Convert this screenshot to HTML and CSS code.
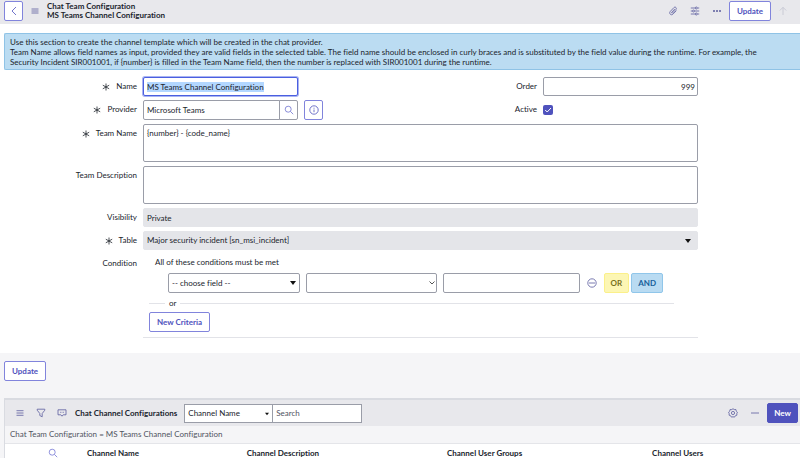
FILE: index.html
```html
<!DOCTYPE html>
<html lang="en">
<head>
<meta charset="utf-8">
<title>Chat Team Configuration</title>
<link rel="stylesheet" href="styles.css">
</head>
<body>
<header class="topbar">
  <button class="btn btn-square" type="button" aria-label="Back"><svg class="icon icon-lg" viewBox="0 0 12 12"><path d="M8 2 4 6l4 4"/></svg></button>
  <button class="tool tool-menu" type="button" aria-label="Menu"><svg class="icon" viewBox="0 0 10 10"><path d="M1.500 3h7M1.500 5h7M1.500 7h7"/></svg></button>
  <h1 class="title">Chat Team Configuration<br>MS Teams Channel Configuration</h1>
  <div class="actions">
    <button class="tool" type="button" aria-label="Attachments"><svg class="icon" viewBox="0 0 10 10"><path d="M6.800 3 3.700 6.300c-.5.600.3 1.300.9.700l3.300-3.500c1.300-1.500-.7-3.300-2-1.900L2.300 5.400c-1.800 2 .8 4.600 2.700 2.700L8.400 4.600"/></svg></button>
    <button class="tool" type="button" aria-label="Personalize form"><svg class="icon" viewBox="0 0 10 10"><path d="M.8 2h4.400M7.400 2h1.800M.8 5h1.600M4.600 5h4.600M.8 8h4.400M7.400 8h1.800"/><circle cx="6.300" cy="2" r="1"/><circle cx="3.500" cy="5" r="1"/><circle cx="6.300" cy="8" r="1"/></svg></button>
    <button class="tool" type="button" aria-label="More options"><svg class="icon solid" viewBox="0 0 10 10"><circle cx="2" cy="5" r="1"/><circle cx="5" cy="5" r="1"/><circle cx="8" cy="5" r="1"/></svg></button>
    <button class="btn" type="button">Update</button>
    <button class="tool tool-muted" type="button" aria-label="Previous record"><svg class="icon" viewBox="0 0 10 10"><path d="M5 9V1.500M1.800 4.500 5 1.300l3.200 3.200"/></svg></button>
  </div>
</header>

<main>
  <p class="notice">Use this section to create the channel template which will be created in the chat provider.<br>Team Name allows field names as input, provided they are valid fields in the selected table. The field name should be enclosed in curly braces and is substituted by the field value during the runtime. For example, the Security Incident SIR001001, if {number} is filled in the Team Name field, then the number is replaced with SIR001001 during the runtime.</p>

  <form class="form">
    <label class="label" for="name"><svg class="star" viewBox="0 0 8 8"><path d="M4 .5v7M.8 2.200l6.400 3.600M7.200 2.200.8 5.800"/></svg>Name</label>
    <input class="field" id="name" type="text" value="MS Teams Channel Configuration">
    <label class="label" for="order">Order</label>
    <input class="field number" id="order" type="text" value="999">

    <label class="label start" for="provider"><svg class="star" viewBox="0 0 8 8"><path d="M4 .5v7M.8 2.200l6.400 3.600M7.200 2.200.8 5.800"/></svg>Provider</label>
    <div class="lookup">
      <input class="field" id="provider" type="text" value="Microsoft Teams">
      <button class="field lookup-btn" type="button" aria-label="Look up provider"><svg class="icon" viewBox="0 0 10 10"><circle cx="4.200" cy="4.200" r="3"/><path d="m6.500 6.500 2.700 2.700"/></svg></button>
      <button class="btn btn-square" type="button" aria-label="Preview record"><svg class="icon" viewBox="0 0 10 10"><circle cx="5" cy="5" r="4.200"/><path d="M5 4.500v2.700M5 2.700v1"/></svg></button>
    </div>
    <label class="label" for="active">Active</label>
    <div class="check-cell"><span class="check"><input id="active" type="checkbox" checked><svg viewBox="0 0 10 10"><path d="m2.200 5 2 2L8 3"/></svg></span></div>

    <label class="label start" for="team-name"><svg class="star" viewBox="0 0 8 8"><path d="M4 .5v7M.8 2.200l6.400 3.600M7.200 2.200.8 5.800"/></svg>Team Name</label>
    <textarea class="field wide" id="team-name">{number} - {code_name}</textarea>

    <label class="label start" for="team-desc">Team Description</label>
    <textarea class="field wide" id="team-desc"></textarea>

    <label class="label start" for="visibility">Visibility</label>
    <input class="field wide readonly" id="visibility" type="text" value="Private" readonly>

    <label class="label start" for="table"><svg class="star" viewBox="0 0 8 8"><path d="M4 .5v7M.8 2.200l6.400 3.600M7.200 2.200.8 5.800"/></svg>Table</label>
    <div class="select wide">
      <select class="field readonly" id="table"><option>Major security incident [sn_msi_incident]</option></select>
      <svg class="caret" viewBox="0 0 6 4"><path d="M0 0h6L3 4z"/></svg>
    </div>

    <span class="label start" id="condition">Condition</span>
    <div class="condition wide" role="group" aria-labelledby="condition">
      <p class="condition-text">All of these conditions must be met</p>
      <div class="criteria">
        <div class="select">
          <select class="field" aria-label="Field"><option>-- choose field --</option></select>
          <svg class="caret" viewBox="0 0 6 4"><path d="M0 0h6L3 4z"/></svg>
        </div>
        <div class="select">
          <select class="field" aria-label="Operator"><option></option></select>
          <svg class="caret caret-line" viewBox="0 0 6 4"><path d="m.5.500 2.500 2.500L5.500.500"/></svg>
        </div>
        <input class="field" type="text" aria-label="Value">
        <button class="tool remove" type="button" aria-label="Remove condition"><svg class="icon" viewBox="0 0 10 10"><circle cx="5" cy="5" r="4.200"/><path d="M2 5h6"/></svg></button>
        <button class="btn btn-or" type="button">OR</button>
        <button class="btn btn-and" type="button">AND</button>
      </div>
      <div class="divider">or</div>
      <button class="btn new-criteria" type="button">New Criteria</button>
    </div>
  </form>

  <div class="footer">
    <button class="btn" type="button">Update</button>
  </div>

  <section class="list">
    <div class="list-bar">
      <button class="tool" type="button" aria-label="List menu"><svg class="icon" viewBox="0 0 10 10"><path d="M1.500 2.700h7M1.500 5h7M1.500 7.300h7"/></svg></button>
      <button class="tool" type="button" aria-label="Filter"><svg class="icon" viewBox="0 0 10 10"><path d="M1.200 1.200h7.600v1L6.200 5.500v3.300L3.800 7.500v-2L1.200 2.200z"/></svg></button>
      <button class="tool" type="button" aria-label="Activity"><svg class="icon" viewBox="0 0 10 10"><path d="M1 1.800h8v5H6.200L5 8.200 3.800 6.800H1zM3 4.300h.8M4.600 4.300h.8M6.200 4.300H7"/></svg></button>
      <h2 class="list-title">Chat Channel Configurations</h2>
      <div class="search">
        <div class="select">
          <select class="field" aria-label="Search column"><option>Channel Name</option></select>
          <svg class="caret caret-small" viewBox="0 0 6 4"><path d="M0 0h6L3 4z"/></svg>
        </div>
        <input class="field" type="text" placeholder="Search" aria-label="Search">
      </div>
      <div class="list-actions">
        <button class="tool" type="button" aria-label="List settings"><svg class="icon" viewBox="0 0 10 10"><path d="m5 .7 1.200.9 1.700-.1.300 1.600L9.400 4.200 8.800 5.700l.1 1.500-1.600.6L6.400 9.200 5 8.700l-1.400.5-.9-1.400-1.600-.6.100-1.500L.6 4.200l1.200-1.100.3-1.600 1.700.1z"/><circle cx="5" cy="5" r="1.600"/></svg></button>
        <button class="tool" type="button" aria-label="Collapse list"><svg class="icon" viewBox="0 0 10 10"><path d="M1 5h8"/></svg></button>
        <button class="btn btn-primary" type="button">New</button>
      </div>
    </div>
    <p class="crumb"><a href="#list">Chat Team Configuration = MS Teams Channel Configuration</a></p>
    <table class="grid" id="list">
      <thead>
        <tr>
          <th class="col-search"><button class="tool" type="button" aria-label="Search columns"><svg class="icon" viewBox="0 0 10 10"><circle cx="4.200" cy="4.200" r="3"/><path d="m6.500 6.500 2.700 2.700"/></svg></button></th>
          <th class="col-name">Channel Name</th>
          <th class="col-desc">Channel Description</th>
          <th class="col-groups">Channel User Groups</th>
          <th>Channel Users</th>
        </tr>
      </thead>
    </table>
  </section>
</main>
<script src="form.js"></script>
</body>
</html>
```
FILE: styles.css
```css
* { box-sizing: border-box; }

html { overflow: hidden; }

body {
  margin: 0;
  background: #f5f5f7;
  color: #20242c;
  font: 8px/11px Lato, "Open Sans", sans-serif;
  font-variant-ligatures: none;
}

h1, h2, p { margin: 0; font-size: inherit; }

button, input, select, textarea { margin: 0; font: inherit; color: inherit; }

svg { display: block; fill: none; stroke: currentColor; }

.icon { width: 10px; height: 10px; stroke-width: 0.8; }
.icon-lg { width: 12px; height: 12px; }
.solid { fill: currentColor; stroke: none; }

.tool {
  display: flex;
  align-items: center;
  justify-content: center;
  padding: 0;
  border: 0;
  background: none;
  color: #5b5c9e;
}
.tool-muted { color: #c3c4d0; }

.btn {
  display: flex;
  align-items: center;
  justify-content: center;
  height: 20px;
  padding: 0 7px;
  border: 1px solid #8184dc;
  border-radius: 2px;
  background: #fff;
  color: #4f52bd;
  font-weight: 700;
}
.btn-square { width: 19px; padding: 0; flex: none; }
.btn-or { padding: 0 6px; border-color: #fbf08a; background: #fcf6b4; color: #76701a; }
.btn-and { padding: 0 6px; border-color: #90c6ea; background: #b9dbf2; color: #17609a; }
.btn-primary { padding: 0 6px; border-color: #4f52bd; background: #4f52bd; color: #fff; }

/* Page header */
.topbar {
  display: flex;
  align-items: center;
  height: 24px;
  padding: 0 12px 2px 4px;
  background: #e8e8ec;
}
.tool-menu { margin: 0 7px; }
.title { line-height: 9px; font-weight: 700; }
.actions { display: flex; align-items: center; gap: 12px; margin-left: auto; }
.actions .btn { margin: 0 -5px; }

main { padding-top: 9px; background: #fff; }

.notice {
  margin-left: 4px;
  padding: 3px 40px 2px 5px;
  border: 1px solid #8fc3e6;
  border-right: 0;
  border-radius: 2px 0 0 2px;
  background: #bbdcf2;
  line-height: 10px;
}

/* Record form */
.form {
  display: grid;
  grid-template-columns: 143fr 155fr 245fr 155fr;
  gap: 4px 0;
  padding: 7px 12.75% 15px 0;
}
.label {
  display: flex;
  align-items: center;
  justify-content: flex-end;
  gap: 6px;
  height: 19px;
  padding-right: 6px;
}
.start { grid-column: 1; }
.wide { grid-column: 2 / -1; }
.star { width: 8px; height: 8px; stroke-width: 0.8; }

.field {
  width: 100%;
  min-width: 0;
  height: 19px;
  padding: 0 3px;
  border: 1px solid #9a9da8;
  border-radius: 2px;
  background: #fff;
  outline: 0;
}
.field:focus {
  border-color: #4b5fe0;
  box-shadow: 0 0 0 1px #a9b4f2;
}
.field::selection { background: #b3d7ff; color: #20242c; }
.field::placeholder { color: #50545f; opacity: 1; }
textarea.field { display: block; height: 38px; padding: 3px; resize: none; }
.number { text-align: right; padding-right: 2px; }
.readonly { border-color: #e4e5e9; background: #e4e5e9; }

.lookup { display: flex; margin-right: -25px; }
.lookup .field { height: 20px; border-radius: 2px 0 0 2px; }
.lookup .lookup-btn {
  display: flex;
  flex: none;
  align-items: center;
  justify-content: center;
  width: 19px;
  margin-left: -1px;
  padding: 0;
  border-radius: 0 2px 2px 0;
  color: #6f72cf;
}
.lookup .btn { margin-left: 6px; }

.lookup + .label { grid-column: 3; }

.check-cell { display: flex; align-items: center; }
.check { position: relative; width: 10px; height: 10px; }
.check input {
  display: block;
  width: 10px;
  height: 10px;
  appearance: none;
  border-radius: 2px;
  background: #4f52bd;
}
.check svg { position: absolute; inset: 0; color: #fff; pointer-events: none; }

.select { position: relative; min-width: 0; }
.select .field { display: block; appearance: none; }
.caret {
  position: absolute;
  top: 8px;
  right: 4px;
  width: 6px;
  height: 4px;
  fill: #111;
  stroke: none;
  pointer-events: none;
}
.wide > .caret { right: 7px; }
.caret-line { right: 2px; fill: none; stroke: #555; }
.caret-small { width: 4px; }

.condition { border-bottom: 1px solid #e2e3e8; padding-bottom: 5px; }
.condition-text { padding: 3px 12px; }
.criteria {
  display: grid;
  grid-template-columns: 132fr 132fr 137fr auto auto auto;
  gap: 6px;
  padding: 2px 35px 0 25px;
}
.criteria .field { height: 20px; }
.remove { width: 12px; }
.btn-and { margin-left: -4px; }
.divider {
  display: flex;
  align-items: center;
  gap: 4px;
  margin: 5px 24px 3px 6px;
}
.divider::before, .divider::after { content: ""; height: 1px; background: #e2e3e8; }
.divider::before { width: 16px; }
.divider::after { flex: 1; }
.new-criteria { margin-left: 6px; }

.footer { padding: 8px 4px 17px; background: #f5f5f7; }

/* Related list */
.list {
  border: solid #d9dbe1;
  border-width: 2px 0 0 1px;
  margin-left: 4px;
  box-shadow: -4px 0 #f5f5f7;
}
.list-bar {
  display: flex;
  align-items: center;
  height: 26px;
  padding: 0 2px 0 10px;
  background: #e8e8ec;
}
.list-bar > .tool { margin-right: 11px; }
.list-title { margin: 0 7px 0 -3px; }
.search { display: flex; flex: 0 1 178px; }
.search > .select { flex: 0 0 50%; }
.search .field { border-radius: 0; }
.search > .field { flex: 1; margin-left: -1px; }
.list-actions { display: flex; align-items: center; gap: 12px; margin-left: auto; }
.list-actions .btn { margin-left: -5px; }

.crumb {
  padding: 3px 5px;
  border-bottom: 1px solid #e4e5e9;
  background: #f5f5f7;
}
.crumb a { color: #50545f; text-decoration: none; }

.grid { width: 100%; border-collapse: collapse; table-layout: fixed; background: #fff; }
.grid th { height: 18px; padding: 0; text-align: left; }
.col-search { width: 10.3%; }
.col-search .tool { margin: 0 auto 0 43px; color: #7679d4; }
.col-name { width: 20.1%; }
.col-desc { width: 25.2%; }
.col-groups { width: 25.8%; }
```
FILE: form.js
```js
const nameField = document.getElementById("name");
nameField.focus();
nameField.select();
```
